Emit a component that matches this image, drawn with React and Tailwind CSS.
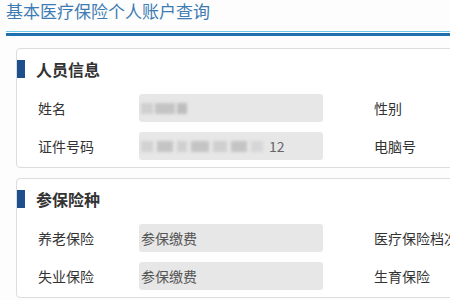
const font = { fontFamily: '"Noto Sans CJK SC", "Microsoft YaHei", sans-serif' }

function Blur({ w, tone = 'bg-[#c4c4c4]' }) {
  return <span className={`inline-block h-[11px] shrink-0 ${tone} blur-[1.5px]`} style={{ width: w }} />
}

function Row({ label, value, right }) {
  return (
    <div className="flex h-[28px] items-center">
      <div className="w-[122px] shrink-0 pl-[21px] text-[14px] text-[#333]">{label}</div>
      <div className="flex h-full w-[184px] shrink-0 items-center overflow-hidden rounded-[3px] bg-[#e7e7e7] pl-[2px] text-[14px] text-[#555]">
        {value}
      </div>
      <div className="ml-[51px] shrink-0 whitespace-nowrap text-[14px] text-[#333]">{right}</div>
    </div>
  )
}

function Card({ title, children }) {
  return (
    <div className="ml-[16px] h-[120px] w-[520px] shrink-0 rounded-[4px] border border-[#dcdcdc] bg-white pt-[11px]">
      <div className="flex h-[18px] items-center">
        <span className="h-[18px] w-[8px] bg-[#1d4f8c]" />
        <span className="ml-[11px] text-[16px] font-bold leading-[18px] text-[#333]">{title}</span>
      </div>
      <div className="mt-[16px] flex flex-col gap-[10px]">{children}</div>
    </div>
  )
}

export default function App() {
  return (
    <div className="h-[300px] w-[450px] overflow-hidden bg-[#fdfdfd]" style={font}>
      <h1 className="pl-[6px] pt-px text-[17px] leading-[20px] text-[#3d7bb3]">基本医疗保险个人账户查询</h1>
      <div className="ml-[6px] mt-[10px] h-px bg-[#6fc6e6]" />
      <div className="ml-[6px] mt-px h-[3px] bg-[#1f70ae]" />

      <div className="mt-[12px] flex flex-col gap-[10px]">
        <Card title="人员信息">
          <Row
            label="姓名"
            right="性别"
            value={<span className="flex gap-[2px]"><Blur w={12} tone="bg-[#d0d0d0]" /><Blur w={20} /><Blur w={10} tone="bg-[#bdbdbd]" /></span>}
          />
          <Row
            label="证件号码"
            right="电脑号"
            value={
              <span className="flex items-center gap-[4px]">
                <Blur w={12} tone="bg-[#d2d2d2]" />
                <Blur w={16} />
                <Blur w={10} tone="bg-[#d0d0d0]" />
                <Blur w={18} />
                <Blur w={14} tone="bg-[#cfcfcf]" />
                <Blur w={16} />
                <Blur w={12} tone="bg-[#d6d6d6]" />
                <span className="ml-[2px] text-[14px] text-[#666]">12</span>
              </span>
            }
          />
        </Card>
        <Card title="参保险种">
          <Row label="养老保险" value="参保缴费" right="医疗保险档次" />
          <Row label="失业保险" value="参保缴费" right="生育保险" />
        </Card>
      </div>
    </div>
  )
}
